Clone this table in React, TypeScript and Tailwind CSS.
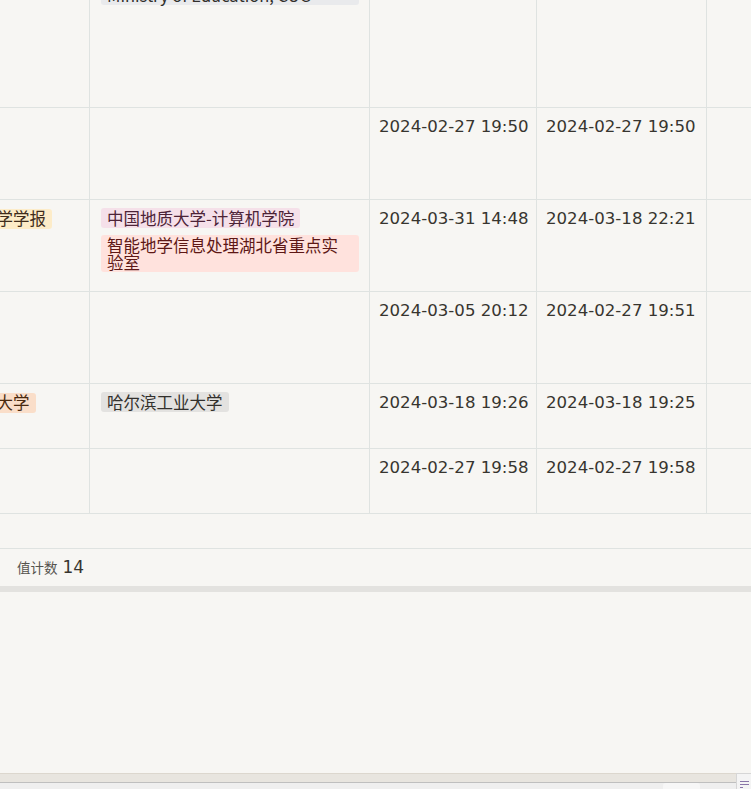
import React from 'react'

type Tag = { text: string; bg: string; fg: string }

interface Row {
  height: number
  left?: { tag: Tag; shift: number }
  orgs: Tag[]
  created?: string
  edited?: string
}

const GRAY: Tag = { text: '', bg: 'bg-[#e3e2e0]', fg: 'text-[#32302c]' }

const rows: Row[] = [
  {
    height: 165,
    orgs: [
      {
        text: 'Key Laboratory of Geological Survey and Evaluation of Ministry of Education, CUG',
        bg: 'bg-[#e9eaec]',
        fg: 'text-[#32302c]',
      },
    ],
  },
  { height: 92, orgs: [], created: '2024-02-27 19:50', edited: '2024-02-27 19:50' },
  {
    height: 92,
    left: { tag: { text: '地球科学学报', bg: 'bg-[#fdecc8]', fg: 'text-[#402c1b]' }, shift: -59 },
    orgs: [
      { text: '中国地质大学-计算机学院', bg: 'bg-[#f5e0e9]', fg: 'text-[#4c2337]' },
      { text: '智能地学信息处理湖北省重点实验室', bg: 'bg-[#ffe2dd]', fg: 'text-[#5d1715]' },
    ],
    created: '2024-03-31 14:48',
    edited: '2024-03-18 22:21',
  },
  { height: 92, orgs: [], created: '2024-03-05 20:12', edited: '2024-02-27 19:51' },
  {
    height: 65,
    left: { tag: { text: '哈尔滨工业大学', bg: 'bg-[#fadec9]', fg: 'text-[#49290e]' }, shift: -92 },
    orgs: [{ ...GRAY, text: '哈尔滨工业大学' }],
    created: '2024-03-18 19:26',
    edited: '2024-03-18 19:25',
  },
  { height: 65, orgs: [], created: '2024-02-27 19:58', edited: '2024-02-27 19:58' },
]

const font = { fontFamily: '"DejaVu Sans", "Noto Sans CJK SC", sans-serif' }

function Pill({ tag }: { tag: Tag }) {
  return (
    <span
      className={`inline-block rounded-[3px] px-[6px] py-[1.5px] text-[16.5px] leading-[17px] ${tag.bg} ${tag.fg}`}
      style={{ fontFamily: '"Noto Sans CJK SC", "DejaVu Sans", sans-serif' }}
    >
      {tag.text}
    </span>
  )
}

export default function App() {
  return (
    <div className="w-[751px] h-[789px] overflow-hidden bg-[#f7f6f3] flex flex-col text-[#37352f]" style={font}>
      {/* table, scrolled down a bit */}
      <div className="-mt-[57px] flex flex-col">
        {rows.map((r, i) => (
          <div
            key={i}
            className="flex border-b border-[#dfe3e1] shrink-0"
            style={{ height: r.height }}
          >
            <div className="w-[90px] shrink-0 border-r border-[#dfe3e1] overflow-hidden pt-[8px]">
              {r.left && (
                <div className="whitespace-nowrap" style={{ marginLeft: r.left.shift }}>
                  <Pill tag={r.left.tag} />
                </div>
              )}
            </div>
            <div className="w-[280px] shrink-0 border-r border-[#dfe3e1] pl-[11px] pr-[10px] pt-[8px] flex flex-col items-start gap-[7px]">
              {r.orgs.map((t, j) => (
                <Pill key={j} tag={t} />
              ))}
            </div>
            <div className="w-[167px] shrink-0 border-r border-[#dfe3e1] pl-[9px] pt-[8px] text-[16.6px] leading-[22px] whitespace-nowrap">
              {r.created}
            </div>
            <div className="w-[170px] shrink-0 border-r border-[#dfe3e1] pl-[9px] pt-[8px] text-[16.6px] leading-[22px] whitespace-nowrap">
              {r.edited}
            </div>
            <div className="flex-1" />
          </div>
        ))}
        <div className="h-[35px] border-b border-[#dfe3e1] shrink-0" />
        <div className="h-[37px] flex items-center pl-[17px] gap-[5px] shrink-0">
          <span
            className="text-[13.5px] text-[#55534e]"
            style={{ fontFamily: '"Noto Sans CJK SC", sans-serif' }}
          >
            值计数
          </span>
          <span className="text-[17px] text-[#37352f]">14</span>
        </div>
        <div className="h-[6px] bg-[#e3e2df] shrink-0" />
      </div>

      <div className="flex-1" />

      {/* bottom bar */}
      <div className="h-[16px] shrink-0 flex">
        <div className="flex-1 flex flex-col">
          <div className="h-[9px] bg-[#e8e5df] border-t border-[#dcd7ce]" />
          <div className="h-[1px] bg-[#bfbfbf]" />
          <div className="flex-1 bg-[#efefef] flex justify-end pr-[36px]">
            <div className="w-[37px] h-full bg-[#f7f7f7] rounded-t-[3px]" />
          </div>
        </div>
        <div className="w-[15px] bg-[#f4f4f4] border-l border-t border-[#d6d6d6] flex items-end justify-center pb-[1px]">
          <svg width="10" height="7" viewBox="0 0 10 7">
            <rect x="1" y="0" width="9" height="1" fill="#8a76a8" />
            <rect x="1" y="3" width="9" height="1" fill="#8a76a8" />
            <rect x="1" y="6" width="3" height="1" fill="#8a76a8" />
          </svg>
        </div>
      </div>
    </div>
  )
}
